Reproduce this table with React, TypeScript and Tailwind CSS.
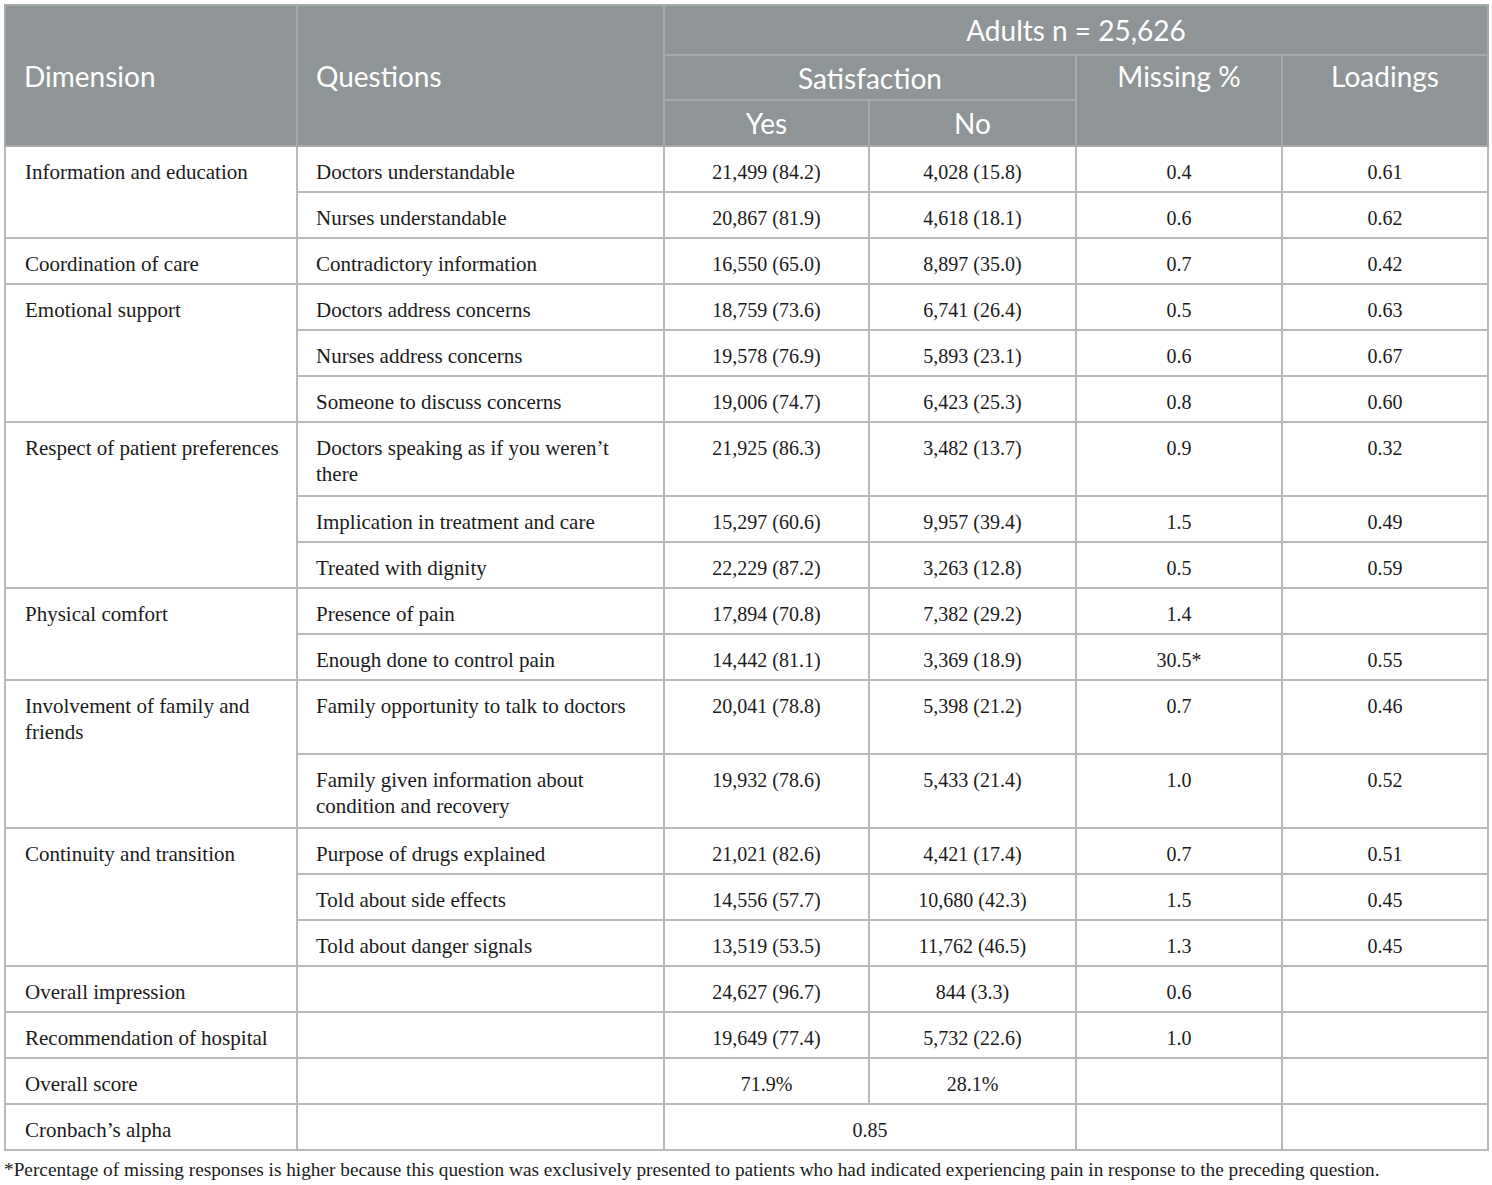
import React from 'react';

type Row = { q: string; yes: string; no: string; miss: string; load: string; tall?: boolean };
type Group = { dim: string; rows: Row[] };

const groups: Group[] = [
  {
    dim: 'Information and education',
    rows: [
      { q: 'Doctors understandable', yes: '21,499 (84.2)', no: '4,028 (15.8)', miss: '0.4', load: '0.61' },
      { q: 'Nurses understandable', yes: '20,867 (81.9)', no: '4,618 (18.1)', miss: '0.6', load: '0.62' },
    ],
  },
  {
    dim: 'Coordination of care',
    rows: [{ q: 'Contradictory information', yes: '16,550 (65.0)', no: '8,897 (35.0)', miss: '0.7', load: '0.42' }],
  },
  {
    dim: 'Emotional support',
    rows: [
      { q: 'Doctors address concerns', yes: '18,759 (73.6)', no: '6,741 (26.4)', miss: '0.5', load: '0.63' },
      { q: 'Nurses address concerns', yes: '19,578 (76.9)', no: '5,893 (23.1)', miss: '0.6', load: '0.67' },
      { q: 'Someone to discuss concerns', yes: '19,006 (74.7)', no: '6,423 (25.3)', miss: '0.8', load: '0.60' },
    ],
  },
  {
    dim: 'Respect of patient preferences',
    rows: [
      { q: 'Doctors speaking as if you weren’t there', yes: '21,925 (86.3)', no: '3,482 (13.7)', miss: '0.9', load: '0.32', tall: true },
      { q: 'Implication in treatment and care', yes: '15,297 (60.6)', no: '9,957 (39.4)', miss: '1.5', load: '0.49' },
      { q: 'Treated with dignity', yes: '22,229 (87.2)', no: '3,263 (12.8)', miss: '0.5', load: '0.59' },
    ],
  },
  {
    dim: 'Physical comfort',
    rows: [
      { q: 'Presence of pain', yes: '17,894 (70.8)', no: '7,382 (29.2)', miss: '1.4', load: '' },
      { q: 'Enough done to control pain', yes: '14,442 (81.1)', no: '3,369 (18.9)', miss: '30.5*', load: '0.55' },
    ],
  },
  {
    dim: 'Involvement of family and friends',
    rows: [
      { q: 'Family opportunity to talk to doctors', yes: '20,041 (78.8)', no: '5,398 (21.2)', miss: '0.7', load: '0.46', tall: true },
      { q: 'Family given information about condition and recovery', yes: '19,932 (78.6)', no: '5,433 (21.4)', miss: '1.0', load: '0.52', tall: true },
    ],
  },
  {
    dim: 'Continuity and transition',
    rows: [
      { q: 'Purpose of drugs explained', yes: '21,021 (82.6)', no: '4,421 (17.4)', miss: '0.7', load: '0.51' },
      { q: 'Told about side effects', yes: '14,556 (57.7)', no: '10,680 (42.3)', miss: '1.5', load: '0.45' },
      { q: 'Told about danger signals', yes: '13,519 (53.5)', no: '11,762 (46.5)', miss: '1.3', load: '0.45' },
    ],
  },
  {
    dim: 'Overall impression',
    rows: [{ q: '', yes: '24,627 (96.7)', no: '844 (3.3)', miss: '0.6', load: '' }],
  },
  {
    dim: 'Recommendation of hospital',
    rows: [{ q: '', yes: '19,649 (77.4)', no: '5,732 (22.6)', miss: '1.0', load: '' }],
  },
  {
    dim: 'Overall score',
    rows: [{ q: '', yes: '71.9%', no: '28.1%', miss: '', load: '' }],
  },
];

const td = 'border-2 border-[#b9b9b9] align-top pt-[12px] pb-[6px] leading-[26px]';
const num = `${td} text-center text-[20px]`;
const th = 'border-2 border-[#a6aaac] font-normal text-white leading-[34px]';

export default function App() {
  return (
    <div className="bg-white min-h-[1185px] pt-[4px] pl-[4px]" style={{ fontFamily: '"Liberation Serif", serif' }}>
      <table className="w-[1483px] border-collapse border-2 border-[#b9b9b9] text-[21px] text-[#1b1b1b] table-fixed">
        <colgroup>
          <col className="w-[292px]" />
          <col className="w-[367px]" />
          <col className="w-[205px]" />
          <col className="w-[207px]" />
          <col className="w-[206px]" />
          <col className="w-[206px]" />
        </colgroup>
        <thead className="bg-[#8f9496] text-[28px] font-['Lato',sans-serif]">
          <tr className="h-[50px]">
            <th rowSpan={3} className={`${th} text-left pl-[18px] align-middle`}>Dimension</th>
            <th rowSpan={3} className={`${th} text-left pl-[18px] align-middle`}>Questions</th>
            <th colSpan={4} className={`${th} text-center align-middle`}>Adults n = 25,626</th>
          </tr>
          <tr className="h-[45px]">
            <th colSpan={2} className={`${th} text-center align-middle`}>Satisfaction</th>
            <th rowSpan={2} className={`${th} text-center align-top pt-[3px]`}>Missing %</th>
            <th rowSpan={2} className={`${th} text-center align-top pt-[3px]`}>Loadings</th>
          </tr>
          <tr className="h-[46px]">
            <th className={`${th} text-center align-middle`}>Yes</th>
            <th className={`${th} text-center align-middle`}>No</th>
          </tr>
        </thead>
        <tbody>
          {groups.map((g) =>
            g.rows.map((r, i) => (
              <tr key={g.dim + i}>
                {i === 0 && (
                  <td rowSpan={g.rows.length} className={`${td} pl-[19px] pr-[12px]`}>
                    {g.dim}
                  </td>
                )}
                <td className={`${td} pl-[18px] pr-[30px] ${r.tall ? 'h-[74px]' : ''}`}>{r.q}</td>
                <td className={num}>{r.yes}</td>
                <td className={num}>{r.no}</td>
                <td className={num}>{r.miss}</td>
                <td className={num}>{r.load}</td>
              </tr>
            ))
          )}
          <tr>
            <td className={`${td} pl-[19px]`}>Cronbach’s alpha</td>
            <td className={td}></td>
            <td colSpan={2} className={num}>0.85</td>
            <td className={td}></td>
            <td className={td}></td>
          </tr>
        </tbody>
      </table>
      <p className="text-[19.3px] text-[#1b1b1b] mt-[7px] leading-[24px]">
        *Percentage of missing responses is higher because this question was exclusively presented to patients who had indicated experiencing pain in response to the preceding question.
      </p>
    </div>
  );
}
